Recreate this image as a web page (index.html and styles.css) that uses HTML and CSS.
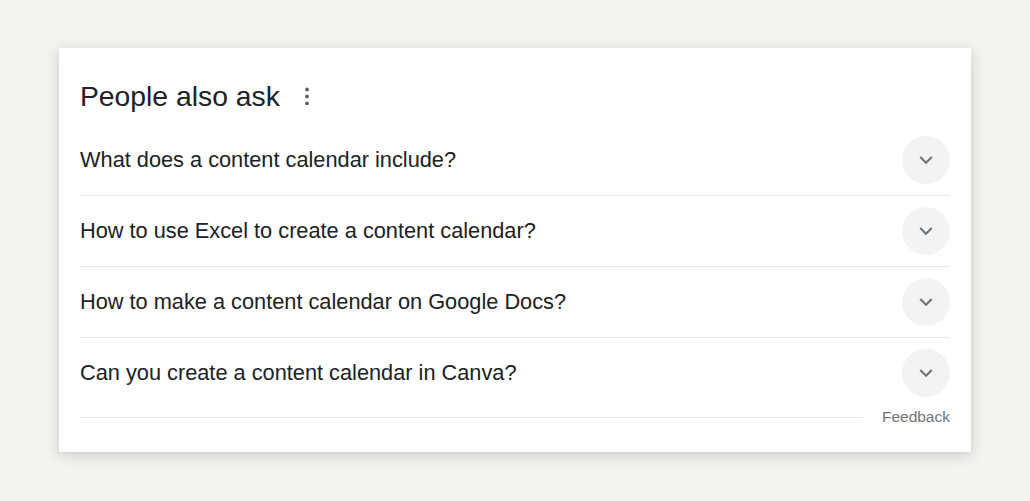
FILE: index.html
```html
<!DOCTYPE html>
<html lang="en">
<head>
<meta charset="utf-8">
<title>People also ask</title>
<link rel="stylesheet" href="styles.css">
</head>
<body>
<div class="page">
  <section class="card">
    <header class="head">
      <h2 class="title">People also ask</h2>
      <span class="kebab" aria-label="More options">
        <svg width="6" height="18" viewBox="0 0 6 18"><circle cx="3" cy="2.5" r="1.9"/><circle cx="3" cy="9.5" r="1.9"/><circle cx="3" cy="16.5" r="1.9"/></svg>
      </span>
    </header>
    <div class="row">
      <span class="q">What does a content calendar include?</span>
      <span class="btn"><svg width="26" height="26" viewBox="0 0 24 24"><path d="M16.59 8.59L12 13.17 7.41 8.59 6 10l6 6 6-6z"/></svg></span>
    </div>
    <div class="row">
      <span class="q">How to use Excel to create a content calendar?</span>
      <span class="btn"><svg width="26" height="26" viewBox="0 0 24 24"><path d="M16.59 8.59L12 13.17 7.41 8.59 6 10l6 6 6-6z"/></svg></span>
    </div>
    <div class="row">
      <span class="q">How to make a content calendar on Google Docs?</span>
      <span class="btn"><svg width="26" height="26" viewBox="0 0 24 24"><path d="M16.59 8.59L12 13.17 7.41 8.59 6 10l6 6 6-6z"/></svg></span>
    </div>
    <div class="row last">
      <span class="q">Can you create a content calendar in Canva?</span>
      <span class="btn"><svg width="26" height="26" viewBox="0 0 24 24"><path d="M16.59 8.59L12 13.17 7.41 8.59 6 10l6 6 6-6z"/></svg></span>
    </div>
    <div class="foot">
      <span class="rule"></span>
      <span class="feedback">Feedback</span>
    </div>
  </section>
</div>
</body>
</html>
```
FILE: styles.css
```css
html, body {
  margin: 0;
  padding: 0;
  background: #f4f3ef;
}
body {
  width: 1030px;
  height: 501px;
  overflow: hidden;
  font-family: "Liberation Sans", Arial, sans-serif;
  color: #202124;
}
.page {
  padding: 48px 0 0 59px;
}
.card {
  width: 912px;
  height: 404px;
  box-sizing: border-box;
  background: #fff;
  padding: 0 21px 0 21px;
  box-shadow: 0 3px 14px rgba(0, 0, 0, 0.16), 0 1px 3px rgba(0, 0, 0, 0.06);
}
.head {
  display: flex;
  align-items: center;
  gap: 24px;
  padding-top: 30px;
  height: 36px;
  padding-bottom: 11px;
}
.title {
  margin: 0;
  font-weight: 400;
  font-size: 28.3px;
  line-height: 36px;
  color: #202124;
}
.kebab {
  display: flex;
  fill: #5f6368;
  margin-top: -1px;
}
.row {
  display: flex;
  align-items: center;
  justify-content: space-between;
  height: 70px;
  border-bottom: 1px solid #e8e8e8;
}
.row.last {
  border-bottom: none;
}
.q {
  font-size: 21.75px;
  line-height: 26px;
  color: #202124;
}
.btn {
  width: 48px;
  height: 48px;
  border-radius: 50%;
  background: #f1f3f4;
  display: flex;
  align-items: center;
  justify-content: center;
  fill: #70757a;
}
.foot {
  display: flex;
  align-items: center;
  gap: 19px;
  height: 18px;
}
.rule {
  flex: 1;
  height: 1px;
  background: #e8e8e8;
}
.feedback {
  font-size: 15.5px;
  line-height: 18px;
  color: #70757a;
}
```
